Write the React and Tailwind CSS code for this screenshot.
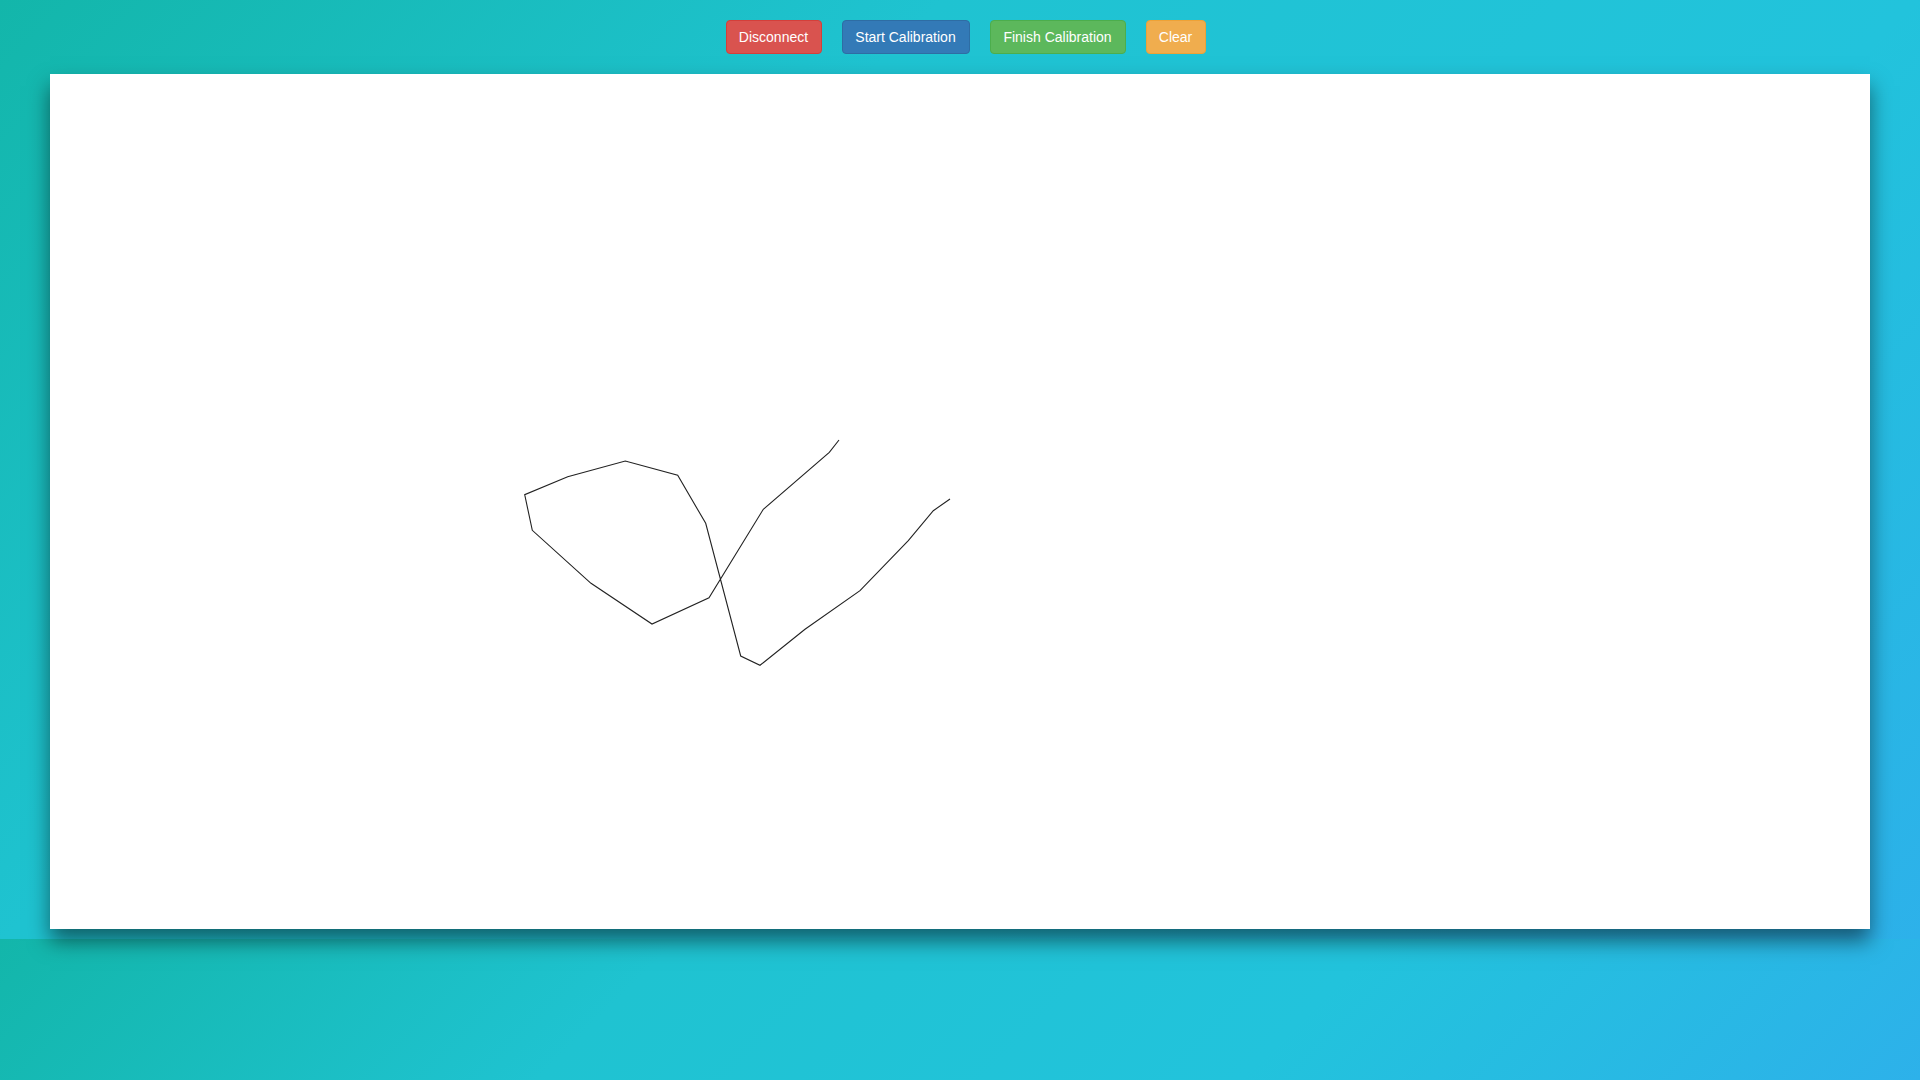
import React from "react";

const pts = [
  [839, 440], [829.3, 452.3], [763.3, 509.3], [709, 597.7], [652, 624], [591, 583.3],
  [532.3, 530.3], [524.7, 494.7], [567.7, 476.7], [625.3, 461], [677.7, 475.3],
  [705.7, 523.3], [740.7, 656], [760, 665.3], [805, 629.3], [860, 590.7],
  [908.3, 540.7], [933.3, 510.7], [950, 499],
];

export default function App() {
  const points = pts.map(([x, y]) => `${x - 50},${y - 74}`).join(" ");
  const btn =
    "h-[34px] px-[12px] rounded-[4px] border text-[14px] leading-[20px] text-white";
  return (
    <div
      className="w-full h-[1080px] overflow-hidden"
      style={{ fontFamily: '"Liberation Sans", Arial, sans-serif' }}
    >
      <div className="h-[939px] bg-[linear-gradient(135deg,#13b6aa_0%,#1fc3d1_33%,#22c3dc_67%,#2db1ea_100%)]">
        <div className="flex justify-center gap-5 pt-[20px] pl-[11px]">
          <button className={`${btn} w-[96px] bg-[#d9534f] border-[#d43f3a]`}>Disconnect</button>
          <button className={`${btn} w-[128px] bg-[#337ab7] border-[#2e6da4]`}>Start Calibration</button>
          <button className={`${btn} w-[136px] bg-[#5cb85c] border-[#4cae4c]`}>Finish Calibration</button>
          <button className={`${btn} w-[60px] bg-[#f0ad4e] border-[#eea236]`}>Clear</button>
        </div>
        <div className="relative mx-[50px] mt-[20px] h-[855px] bg-white shadow-[0_12px_20px_rgba(0,0,0,0.5)]">
          <svg width="1820" height="855" className="block">
            <polyline points={points} fill="none" stroke="#222" strokeWidth="1.1" />
          </svg>
        </div>
      </div>
      <div className="h-[141px] bg-[linear-gradient(135deg,#13b6aa_0%,#1fc3d1_33%,#22c3dc_67%,#2db1ea_100%)]" />
    </div>
  );
}
